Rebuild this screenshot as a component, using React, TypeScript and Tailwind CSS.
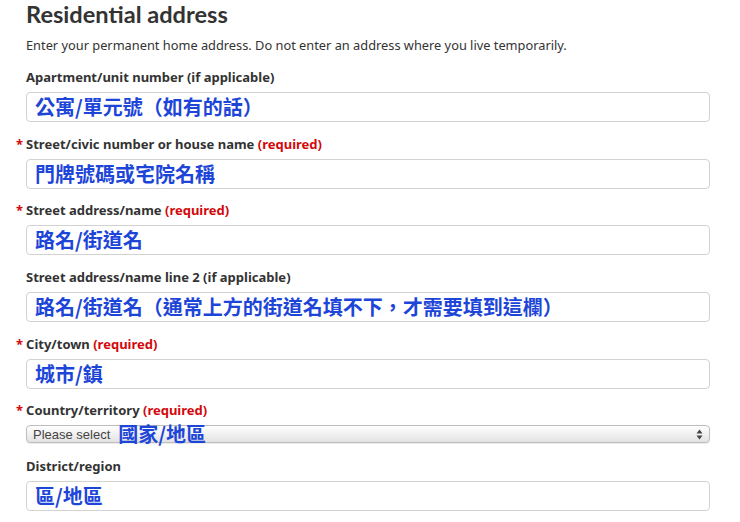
const body = { fontFamily: '"Noto Sans", "Open Sans", sans-serif' };
const cjk = { fontFamily: '"Noto Sans CJK TC", "Noto Sans", sans-serif' };

type Field = {
  label: string;
  required?: boolean;
  value: string;
};

const fields: Field[] = [
  { label: "Apartment/unit number (if applicable)", value: "公寓/單元號（如有的話）" },
  { label: "Street/civic number or house name", required: true, value: "門牌號碼或宅院名稱" },
  { label: "Street address/name", required: true, value: "路名/街道名" },
  {
    label: "Street address/name line 2 (if applicable)",
    value: "路名/街道名（通常上方的街道名填不下，才需要填到這欄）",
  },
  { label: "City/town", required: true, value: "城市/鎮" },
];

function Label({ text, required }: { text: string; required?: boolean }) {
  return (
    <div className="h-[18px] text-[13px] leading-[18px] font-bold text-[#333]" style={body}>
      {required && <span className="-ml-[10px] mr-[3px] text-[#d3080c]">*</span>}
      {text}
      {required && <span className="text-[#d3080c]"> (required)</span>}
    </div>
  );
}

function TextBox({ value }: { value: string }) {
  return (
    <div className="mt-[6px] flex h-[30px] items-center rounded-[4px] border border-[#d2d2d2] bg-white pl-[8px]">
      <span className="text-[20px] leading-none font-bold text-[#1d46d8]" style={cjk}>
        {value}
      </span>
    </div>
  );
}

export default function App() {
  return (
    <div className="min-h-[522px] w-[740px] bg-white pl-[26px] pr-[30px] text-[#333]">
      <h2
        className="h-[28px] text-[23.6px] leading-[28px] font-bold text-[#333]"
        style={{ fontFamily: 'Lato, "Noto Sans", sans-serif' }}
      >
        Residential address
      </h2>
      <p className="mt-[8px] text-[12.8px] leading-[18px] text-[#333]" style={body}>
        Enter your permanent home address. Do not enter an address where you live temporarily.
      </p>

      <div className="mt-[14px] flex flex-col gap-[12.67px]">
        {fields.map((f) => (
          <div key={f.label}>
            <Label text={f.label} required={f.required} />
            <TextBox value={f.value} />
          </div>
        ))}

        <div>
          <Label text="Country/territory" required />
          <div className="mt-[6px] flex h-[18px] items-center rounded-[4px] border border-[#bdbdbd] bg-gradient-to-b from-white to-[#e3e3e3] pl-[6px] pr-[6px] shadow-[0_1px_1px_rgba(0,0,0,0.08)]">
            <span
              className="text-[13px] leading-none text-[#444]"
              style={{ fontFamily: '"Liberation Sans", Arial, sans-serif' }}
            >
              Please select
            </span>
            <span className="ml-[8px] text-[20px] leading-none font-bold text-[#1d46d8]" style={cjk}>
              國家/地區
            </span>
            <svg className="ml-auto" width="7" height="11" viewBox="0 0 7 11">
              <path d="M3.5 0.5 L6.5 4.5 H0.5 Z" fill="#444" />
              <path d="M3.5 10.5 L6.5 6.5 H0.5 Z" fill="#444" />
            </svg>
          </div>
        </div>

        <div className="mt-[1px]">
          <Label text="District/region" />
          <TextBox value="區/地區" />
        </div>
      </div>
    </div>
  );
}
